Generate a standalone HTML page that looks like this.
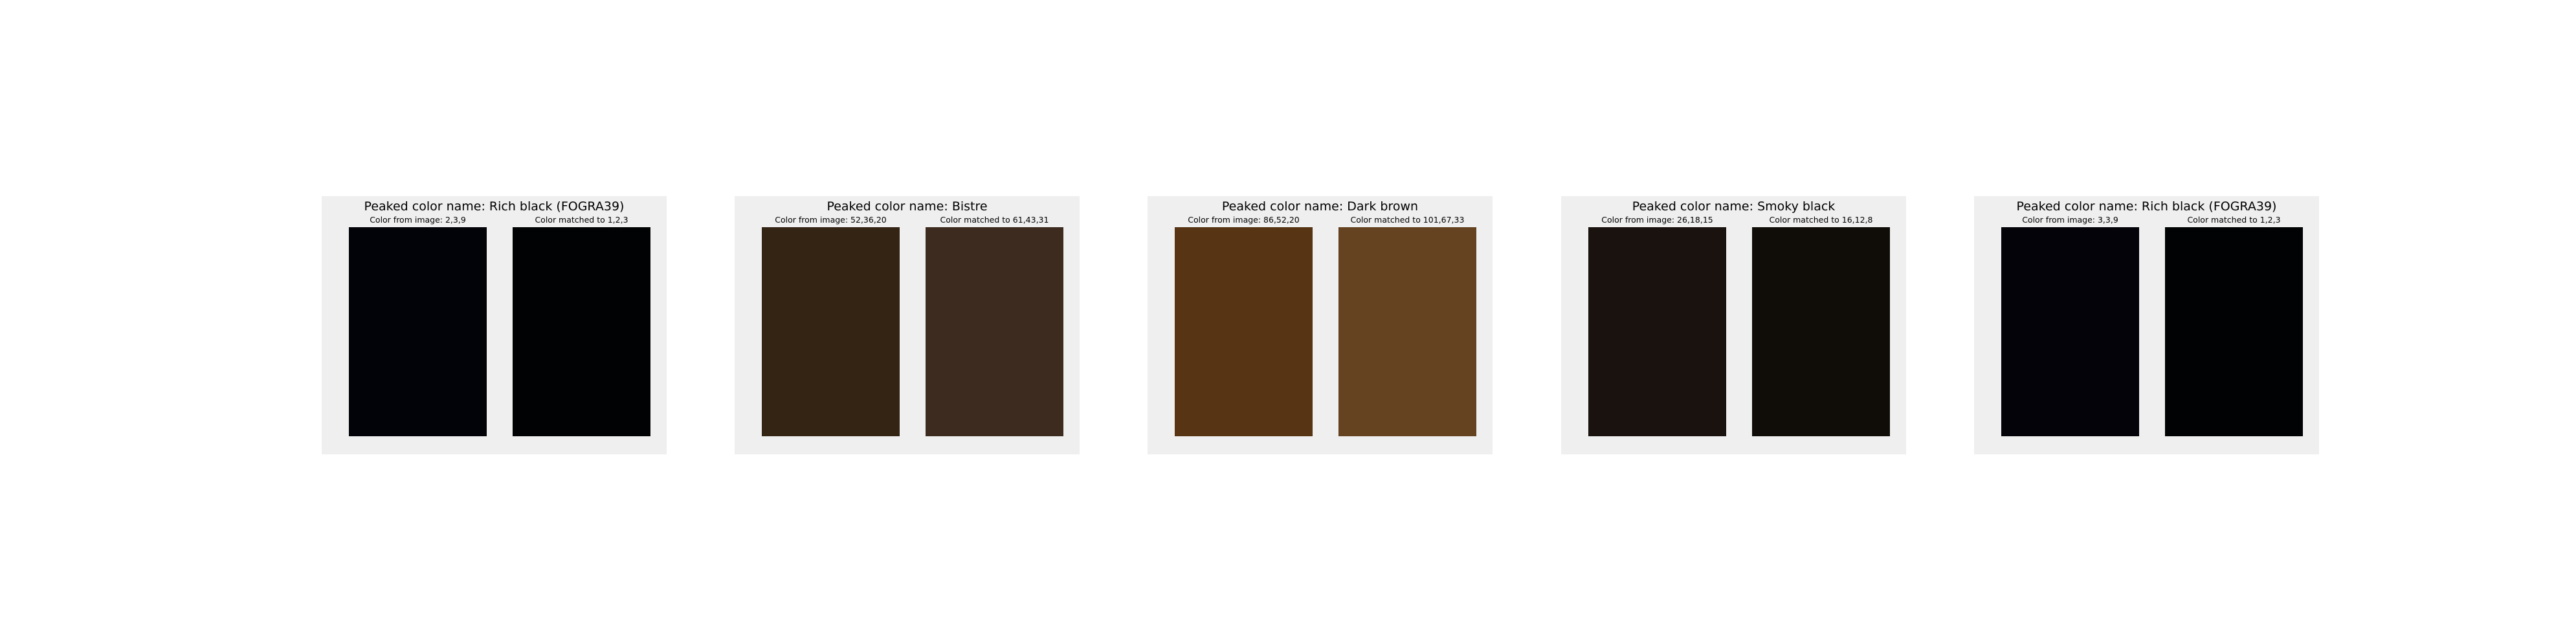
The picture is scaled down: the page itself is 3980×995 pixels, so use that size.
<!DOCTYPE html>
<html><head><meta charset="utf-8"><style>
html,body{margin:0;padding:0;background:#fff;width:3980px;height:995px;overflow:hidden;position:relative;font-family:"DejaVu Sans","Liberation Sans",sans-serif;}
.p{position:absolute;top:303px;width:533px;height:399px;background:#efefef;}
.t{position:absolute;top:4px;left:0;width:533px;text-align:center;font-size:19px;line-height:24px;color:#000;white-space:nowrap;}
.s{position:absolute;top:29px;width:213px;text-align:center;font-size:12.5px;line-height:16px;color:#000;white-space:nowrap;}
.w{position:absolute;top:48px;width:213px;height:323px;}
.a{left:42px}.b{left:295px}
</style></head><body>
<div class="p" style="left:497px"><div class="t">Peaked color name: Rich black (FOGRA39)</div><div class="s a">Color from image: 2,3,9</div><div class="s b">Color matched to 1,2,3</div><div class="w a" style="background:rgb(2,3,9)"></div><div class="w b" style="background:rgb(1,2,3)"></div></div>
<div class="p" style="left:1135px"><div class="t">Peaked color name: Bistre</div><div class="s a">Color from image: 52,36,20</div><div class="s b">Color matched to 61,43,31</div><div class="w a" style="background:rgb(52,36,20)"></div><div class="w b" style="background:rgb(61,43,31)"></div></div>
<div class="p" style="left:1773px"><div class="t">Peaked color name: Dark brown</div><div class="s a">Color from image: 86,52,20</div><div class="s b">Color matched to 101,67,33</div><div class="w a" style="background:rgb(86,52,20)"></div><div class="w b" style="background:rgb(101,67,33)"></div></div>
<div class="p" style="left:2412px"><div class="t">Peaked color name: Smoky black</div><div class="s a">Color from image: 26,18,15</div><div class="s b">Color matched to 16,12,8</div><div class="w a" style="background:rgb(26,18,15)"></div><div class="w b" style="background:rgb(16,12,8)"></div></div>
<div class="p" style="left:3050px"><div class="t">Peaked color name: Rich black (FOGRA39)</div><div class="s a">Color from image: 3,3,9</div><div class="s b">Color matched to 1,2,3</div><div class="w a" style="background:rgb(3,3,9)"></div><div class="w b" style="background:rgb(1,2,3)"></div></div>
</body></html>
